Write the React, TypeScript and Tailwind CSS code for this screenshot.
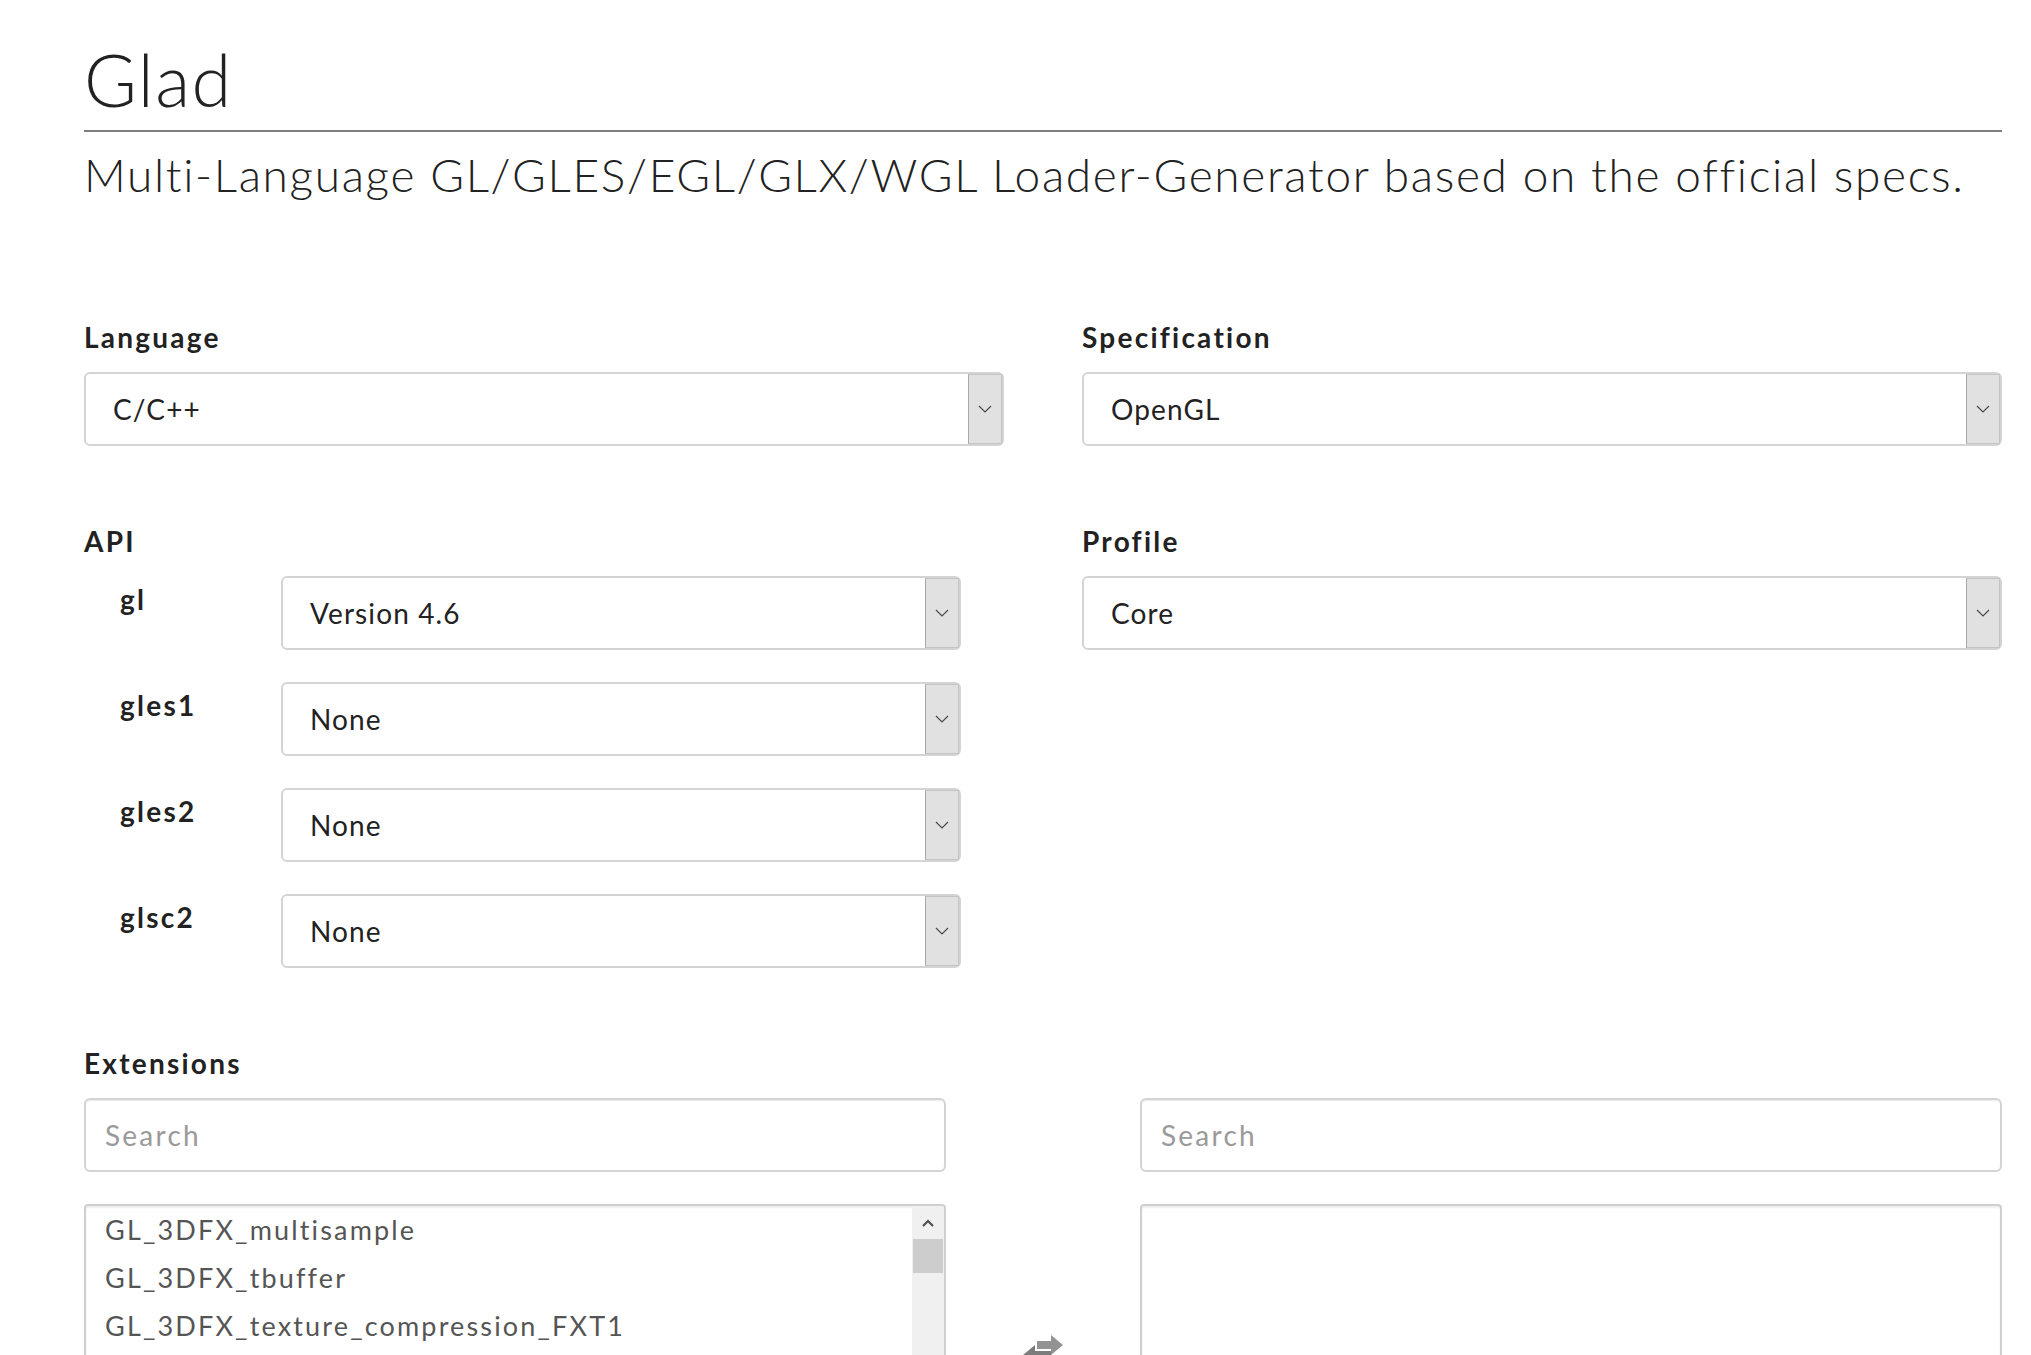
import React from "react";

const extensions = [
  "GL_3DFX_multisample",
  "GL_3DFX_tbuffer",
  "GL_3DFX_texture_compression_FXT1",
  "GL_AMD_blend_minmax_factor",
  "GL_AMD_conservative_depth",
  "GL_AMD_debug_output",
  "GL_AMD_depth_clamp_separate",
];

const apis = [
  { name: "gl", value: "Version 4.6" },
  { name: "gles1", value: "None" },
  { name: "gles2", value: "None" },
  { name: "glsc2", value: "None" },
];

const Chevron = () => (
  <svg width="14" height="8" viewBox="0 0 14 8" fill="none">
    <path d="M1 1 L7 7 L13 1" stroke="#4a4a4a" strokeWidth="1.2" />
  </svg>
);

const Select = ({ value, className = "" }: { value: string; className?: string }) => (
  <div
    className={`flex h-[74px] items-stretch rounded-[6px] border-2 border-[#d4d4d4] bg-white ${className}`}
  >
    <div className="flex flex-1 items-center pl-[27px] text-[28px] tracking-[0.04em] text-[#222]">
      {value}
    </div>
    <div className="flex w-[34px] items-center justify-center border border-[#c4c4c4] border-l-[#a8a8a8] bg-[#e1e1e1]">
      <Chevron />
    </div>
  </div>
);

const Label = ({ children }: { children: React.ReactNode }) => (
  <div className="mb-[17px] h-[36px] text-[28px] font-bold leading-[36px] tracking-[0.08em] text-[#222]">
    {children}
  </div>
);

const SearchBox = () => (
  <div className="flex h-[74px] items-center rounded-[6px] border-2 border-[#d4d4d4] shadow-[inset_0_1px_1px_rgba(0,0,0,0.08)] pl-[19px] text-[28px] tracking-[0.08em] text-[#9a9a9a]">
    Search
  </div>
);

// glyphicon-like "transfer" arrows
const SwapIcon = () => (
  <svg width="44" height="40" viewBox="0 0 44 40">
    <path d="M30 16 H14 V10 L2 20 L14 30 V24 H30 Z" fill="#7c7c7c" />
    <path d="M16 6 H30 V0 L42 10 L30 20 V14 H16 Z" fill="#939393" />
  </svg>
);

export default function App() {
  return (
    <div className="h-[1355px] overflow-hidden bg-white font-['Lato','Liberation_Sans',sans-serif] text-[#222]">
      <div className="ml-[84px] w-[1918px] pt-[43px]">
        <h1 className="border-b-2 border-[#7f7f7f] pb-[15px] text-[72px] font-light leading-none tracking-[0.02em]">
          Glad
        </h1>
        <p className="mt-[20px] text-[46px] font-light leading-none tracking-[0.036em]">
          Multi-Language GL/GLES/EGL/GLX/WGL Loader-Generator based on the official specs.
        </p>

        <div className="mt-[121px] grid grid-cols-2 gap-x-[78px]">
          <div>
            <Label>Language</Label>
            <Select value="C/C++" />
          </div>
          <div>
            <Label>Specification</Label>
            <Select value="OpenGL" />
          </div>

          <div className="mt-[77px]">
            <Label>API</Label>
            <div className="flex flex-col gap-[32px]">
              {apis.map((api) => (
                <div key={api.name} className="flex pl-[36px]">
                  <div className="mt-[5px] h-[36px] w-[161px] text-[28px] font-bold leading-[36px] tracking-[0.08em]">
                    {api.name}
                  </div>
                  <Select value={api.value} className="w-[680px]" />
                </div>
              ))}
            </div>
          </div>
          <div className="mt-[77px]">
            <Label>Profile</Label>
            <Select value="Core" />
          </div>
        </div>

        <div className="mt-[77px]">
          <Label>Extensions</Label>
          <div className="grid grid-cols-[862px_194px_862px] items-start">
            <div className="flex flex-col gap-[32px]">
              <SearchBox />
              <div className="relative h-[302px] overflow-hidden rounded-[4px] border-2 border-[#cfcfcf] shadow-[inset_0_2px_2px_rgba(0,0,0,0.07)]">
                <div className="pl-[19px] pr-[40px]">
                  {extensions.map((ext) => (
                    <div key={ext} className="h-[48px] text-[27px] leading-[48px] tracking-[0.08em] text-[#555]">
                      {ext}
                    </div>
                  ))}
                </div>
                {/* fake scrollbar */}
                <div className="absolute inset-y-0 right-0 flex w-[32px] flex-col bg-[#f0f0f0]">
                  <div className="flex h-[33px] items-center justify-center">
                    <svg width="12" height="8" viewBox="0 0 12 8">
                      <path d="M1 7 L6 2 L11 7" stroke="#505050" strokeWidth="2.2" fill="none" />
                    </svg>
                  </div>
                  <div className="mx-[1px] h-[34px] bg-[#cdcdcd]" />
                </div>
              </div>
            </div>
            <div className="flex flex-col">
              <div className="h-[106px]" />
              <div className="flex h-[302px] items-center justify-center">
                <SwapIcon />
              </div>
            </div>
            <div className="flex flex-col gap-[32px]">
              <SearchBox />
              <div className="h-[302px] rounded-[4px] border-2 border-[#cfcfcf] shadow-[inset_0_2px_2px_rgba(0,0,0,0.07)]" />
            </div>
          </div>
        </div>
      </div>
    </div>
  );
}
